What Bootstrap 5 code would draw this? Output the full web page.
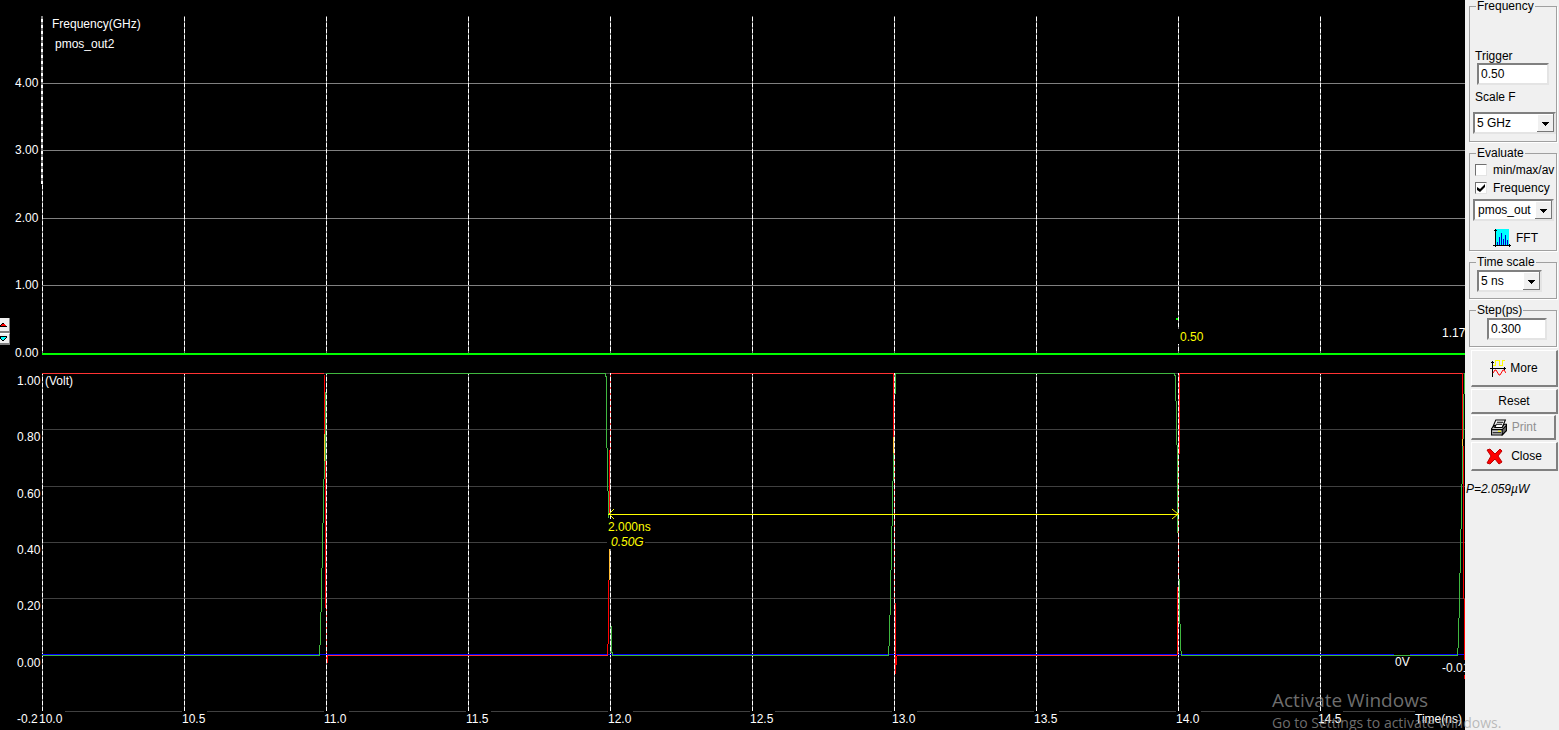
<!DOCTYPE html>
<html lang="en">
<head>
<meta charset="utf-8">
<meta name="viewport" content="width=device-width, initial-scale=1">
<title>Frequency vs. time simulation</title>
<link href="https://cdn.jsdelivr.net/npm/bootstrap@5.3.0/dist/css/bootstrap.min.css" rel="stylesheet">
<style>
body{background:#f0f0f0;color:#000;font:12px/16px "Liberation Sans",Arial,sans-serif}
.scope{background:#000;min-width:0}
.scope svg text{font:12px "Liberation Sans",Arial,sans-serif;fill:#fff}
.scope svg text.yel{fill:#ff0}
.scope svg text.slant{font-style:italic}
.panel{width:94px;padding:0 2px 0 4px}
.group{border:1px solid #a0a0a0;box-shadow:1px 1px 0 #fff;margin:0 0 5px;padding:2px 0 6px 3px;min-width:0}
.group legend{float:none;width:auto;font-size:12px;line-height:12px;margin:0 0 0 3px;padding:0 1px}
.group.trig{padding-top:0;padding-bottom:7px}
.group.eval{padding-bottom:3px}
.cap{display:block;margin-left:2px;line-height:14px}
.cap-trigger{margin-top:37px}
.cap-scale{margin-top:5px;margin-bottom:8px}
.sunk{height:22px;border:2px solid;border-color:#808080 #e4e4e4 #e4e4e4 #808080;border-radius:0;background:#fff;color:#000;font-size:12px;line-height:18px;padding:0 2px;display:block}
select.sunk{appearance:none;background:#fff url("data:image/svg+xml,%3Csvg xmlns='http://www.w3.org/2000/svg' width='17' height='18'%3E%3Cpath fill='%23777' d='M0 0h17v18H0z'/%3E%3Cpath fill='%23fff' d='M0 0h16v17H0z'/%3E%3Cpath fill='%23f0f0f0' d='M1 1h15v16H1z'/%3E%3Cpath d='M5 8h7v1H5zM6 9h5v1H6zM7 10h3v1H7zM8 11h1v1H8z'/%3E%3C/svg%3E") right center no-repeat}
.w-trigger{width:72px}.w-scale{width:83px}.w-signal{width:81px;padding-left:3px;margin-top:2px}.w-time{width:65px}.w-step{width:60px;margin-left:14px}
.tick{appearance:none;width:12px;height:12px;margin:0;flex:none;background:#fff;border:1px solid;border-color:#707070 #e4e4e4 #e4e4e4 #707070}
.tick:checked{background:#fff url("data:image/svg+xml,%3Csvg xmlns='http://www.w3.org/2000/svg' width='10' height='10'%3E%3Cpath d='M1 4l3 2 5-5v3L4 9 1 7z'/%3E%3C/svg%3E")}
.opt{height:18px;gap:6px;padding-left:2px}
.raised{border:solid;border-width:1px 2px 2px 1px;border-color:#fff #808080 #808080 #fff;border-radius:0;background:#f0f0f0;color:#000;font-size:12px;line-height:16px;padding:0;width:87px;margin:0 0 2px 2px}
.raised:disabled{background:#f0f0f0;color:#909090;border-color:#fff #808080 #808080 #fff;opacity:1}
.raised.h-reset{margin-bottom:1px}
.flatbtn{border:0;border-radius:0;font-size:12px;line-height:16px;padding:0;color:#000;gap:5px}
.h-more{height:37px}.h-reset,.h-print{height:25px}.h-close{height:29px}
.raised.h-print{width:85px}
.group.step{margin-bottom:3px}
.power{font-style:italic;margin:8px 0 0 -3px}
.spin{left:0;top:318px;width:10px}
.spin button{display:block;width:10px;height:15px;padding:0;border:solid #808080;border-width:0 1px 2px 0;background:#f0f0f0;line-height:0}
.spin button+button{height:12px;border-top:1px solid #fff}
.watermark{right:51px;bottom:-2px;width:236px;color:rgba(160,160,160,.69);font-family:"Open Sans","Noto Sans",sans-serif;font-size:14px;line-height:18px;white-space:nowrap;pointer-events:none}
.watermark strong{display:block;font-weight:400;font-size:19px;line-height:28px}
</style>
</head>
<body>
<div class="d-flex min-vh-100 position-relative overflow-hidden">
<main class="scope flex-grow-1 position-relative">
<svg class="d-block w-100 h-auto" viewBox="0 0 1465 730" shape-rendering="crispEdges" role="img" aria-label="Frequency and voltage against time">
<defs>
<pattern id="dash" width="1" height="6" y="16" patternUnits="userSpaceOnUse"><path fill="#808080" d="M0 0h1v6H0z"/><path fill="#fff" d="M0 1h1v4H0z"/></pattern>
<pattern id="thick" width="2" height="6" y="16" x="41" patternUnits="userSpaceOnUse"><path fill="#808080" d="M0 0h2v6H0z"/><path fill="#fff" d="M0 3h2v3H0z"/></pattern>
<pattern id="dashred" width="1" height="6" y="16" patternUnits="userSpaceOnUse"><path fill="#f44" d="M0 0h1v6H0z"/><path fill="#fff" d="M0 1h1v4H0z"/></pattern>
</defs>
<!-- horizontal grid -->
<path fill="#808080" d="M42 83h1423v1H42zM42 150h1423v1H42zM42 218h1423v1H42zM42 285h1423v1H42zM42 353h1423v1H42z"/>
<path fill="#404040" d="M42 373h1423v1H42zM42 429h1423v1H42zM42 486h1423v1H42zM42 542h1423v1H42zM42 598h1423v1H42zM42 711h1373v1H42z"/>
<!-- vertical grid -->
<path fill="url(#dash)" d="M42 16h1v337h-1zM184 16h1v337h-1zM326 16h1v337h-1zM468 16h1v337h-1zM610 16h1v337h-1zM752 16h1v337h-1zM894 16h1v337h-1zM1036 16h1v337h-1zM1178 16h1v337h-1zM1320 16h1v337h-1z"/>
<path fill="url(#dash)" d="M42 373h1v338h-1zM184 373h1v338h-1zM326 373h1v338h-1zM468 373h1v338h-1zM610 373h1v338h-1zM752 373h1v338h-1zM894 373h1v338h-1zM1036 373h1v338h-1zM1178 373h1v338h-1zM1320 373h1v338h-1z"/>
<path fill="url(#thick)" d="M41 16h2v168h-2z"/>
<path fill="url(#dashred)" d="M326 607h1v52h-1zM610 373h1v77h-1zM894 453h1v150h-1zM1178 454h1v124h-1z"/>
<!-- frequency trace -->
<path fill="#0f0" d="M42 353h1423v2H42zM1176 318h2v2h-2z"/>
<!-- supply at zero -->
<path fill="#00f" d="M42 654h1352v1H42zM1410 654h55v1h-55z"/>
<!-- signals -->
<path fill="#40b840" d="M326 373h280v1H326zM895 373h280v1H895zM42 655h278v1H42zM612 655h277v1H612zM1181 655h277v1h-277z
M324 461h1v18h-1zM323 479h1v44h-1zM322 523h1v45h-1zM321 568h1v44h-1zM320 612h1v33h-1zM319 645h1v11h-1zM325 392h1v69h-1z
M605 373h1v4h-1zM606 376h1v72h-1zM607 448h1v43h-1zM608 491h1v27h-1zM611 626h1v27h-1zM612 652h1v4h-1z
M893 453h1v28h-1zM892 481h1v45h-1zM891 526h1v44h-1zM890 570h1v45h-1zM889 615h1v31h-1zM888 646h1v10h-1zM895 373h1v21h-1z
M1174 373h1v3h-1zM1175 375h1v26h-1zM1176 401h1v44h-1zM1177 445h1v88h-1zM1179 579h1v45h-1zM1180 624h1v27h-1zM1181 651h1v5h-1z
M1462 446h1v38h-1zM1461 484h1v45h-1zM1460 529h1v44h-1zM1459 573h1v45h-1zM1458 618h1v30h-1zM1457 648h1v8h-1zM1464 373h1v21h-1zM1463 394h1v45h-1z"/>
<path fill="#f33" d="M42 373h282v1H42zM611 373h283v1H611zM1179 373h284v1h-284zM328 655h280v1H328zM897 655h280v1H897z"/>
<path fill="#f00" d="M324 375h1v59h-1zM325 461h1v147h-1zM327 655h1v8h-1z
M609 450h1v64h-1zM608 580h1v64h-1zM607 644h1v11h-1z
M893 373h1v64h-1zM895 603h1v71h-1zM896 656h1v9h-1z
M1179 373h1v81h-1zM1177 587h1v68h-1z
M1462 373h1v66h-1zM1463 446h1v153h-1zM1464 599h1v61h-1zM1464 675h1v4h-1z"/>
<path fill="#fb3" d="M324 434h1v27h-1zM609 549h1v31h-1zM893 437h1v16h-1zM1462 439h1v7h-1z"/>
<!-- period marker -->
<path fill="#ff0" d="M608 514h571v1H608z"/>
<path fill="none" stroke="#ff0" shape-rendering="auto" d="M614 509l-5 5 5 5M1172 509l6 5-6 5"/>
<!-- label backgrounds -->
<path fill="#000" d="M607 519h46v15h-46zM607 534h38v15h-38zM1178 329h28v15h-28zM38 711h27v15H38zM182 711h25v15h-25zM324 711h25v15h-25zM466 711h25v15h-25zM608 711h25v15h-25zM750 711h25v15h-25zM892 711h25v15h-25zM1034 711h25v15h-25zM1176 711h25v15h-25zM1318 711h25v15h-25zM1442 326h23v15h-23z"/>
<g>
<text x="52" y="28">Frequency(GHz)</text><text x="55" y="48">pmos_out2</text>
<text x="15" y="87">4.00</text><text x="15" y="154">3.00</text><text x="15" y="222">2.00</text><text x="15" y="289">1.00</text><text x="15" y="357">0.00</text>
<text x="17" y="385">1.00</text><text x="45" y="385">(Volt)</text><text x="17" y="441">0.80</text><text x="17" y="498">0.60</text><text x="17" y="554">0.40</text><text x="17" y="610">0.20</text><text x="17" y="667">0.00</text>
<text x="17" y="723">-0.2</text><text x="39" y="723">10.0</text><text x="182" y="723">10.5</text><text x="324" y="723">11.0</text><text x="466" y="723">11.5</text><text x="608" y="723">12.0</text><text x="750" y="723">12.5</text><text x="892" y="723">13.0</text><text x="1034" y="723">13.5</text><text x="1176" y="723">14.0</text><text x="1318" y="723">14.5</text><text x="1415" y="723">Time(ns)</text>
<text class="yel" x="608" y="531">2.000ns</text><text class="yel slant" x="611" y="546">0.50G</text><text class="yel" x="1180" y="341">0.50</text>
<text x="1442" y="337">1.17</text><text x="1395" y="666">0V</text><text x="1442" y="672">-0.01</text>
</g>
</svg>
<div class="spin position-absolute">
<button type="button" aria-label="Scale up"><svg width="9" height="13" shape-rendering="crispEdges"><path d="M0 9h7V8H6V7H5V6H4V5H2v1H1v1H0z"/><path fill="#f00" d="M1 8h5V7H5V6H2v1H1z"/></svg></button>
<button type="button" aria-label="Scale down"><svg width="9" height="9" shape-rendering="crispEdges"><path d="M0 2h7v2H6v1H5v1H4v1H2V6H1V5H0z"/><path fill="#0ff" d="M1 3h5v1H5v1H4v1H2V5H1z"/></svg></button>
</div>
</main>
<aside class="panel flex-shrink-0">
<form class="d-flex flex-column">
<fieldset class="group trig">
<legend>Frequency</legend>
<label for="trigger" class="cap cap-trigger">Trigger</label>
<input id="trigger" class="sunk w-trigger ms-1" value="0.50">
<label for="scale" class="cap cap-scale">Scale F</label>
<select id="scale" class="sunk w-scale"><option>5 GHz</option></select>
</fieldset>
<fieldset class="group eval">
<legend>Evaluate</legend>
<div class="opt d-flex align-items-center"><input class="tick" type="checkbox" id="mm"><label for="mm" class="text-nowrap">min/max/av</label></div>
<div class="opt d-flex align-items-center"><input class="tick" type="checkbox" id="fq" checked><label for="fq">Frequency</label></div>
<select class="sunk w-signal" aria-label="Signal"><option>pmos_out</option></select>
<button type="button" class="btn flatbtn d-flex align-items-center ms-3 mt-2 ps-1"><svg width="18" height="18" shape-rendering="crispEdges"><path fill="#0ff" d="M2 0h14v16H2z"/><path d="M2 0h1v18H2zM1 1h3v1H1zM0 16h18v1H0zM16 15h1v3h-1z"/><path fill="#00c" d="M4 13h1v3H4zM6 8h1v8H6zM8 4h1v12H8zM10 10h1v6h-1zM12 6h1v10h-1zM14 11h1v5h-1z"/></svg>FFT</button>
</fieldset>
<fieldset class="group">
<legend>Time scale</legend>
<select class="sunk w-time ms-1" aria-label="Time scale"><option>5 ns</option></select>
</fieldset>
<fieldset class="group step">
<legend>Step(ps)</legend>
<input class="sunk w-step" aria-label="Step in picoseconds" value="0.300">
</fieldset>
<button type="button" class="btn raised h-more d-flex align-items-center justify-content-center gap-1"><svg width="16" height="17" shape-rendering="crispEdges"><path fill="#ff0" d="M3 5h2V0h5v5h2V0h3v1h-2v5H9V1H6v5H3z"/><path d="M2 1h1v16H2zM1 2h3v1H1zM0 8h16v1H0zM14 7h1v3h-1z"/><path fill="none" stroke="#f00" shape-rendering="auto" d="M3 13l2-3h1l3 5h1l3-5h1l2 3"/></svg>More</button>
<button type="button" class="btn raised h-reset">Reset</button>
<button type="button" class="btn raised h-print d-flex align-items-center justify-content-center gap-1" disabled><svg width="18" height="17" viewBox="0 0 16 16"><path fill="#fff" stroke="#000" d="M5 1h9l-3 7H2z"/><path stroke="#000" d="M6 3h6M5 5h6"/><path fill="#ccc" stroke="#000" d="M1 9l3-3h1L4 8h7l2-3h2v5l-4 5H1z"/><path fill="#666" stroke="#000" d="M11 10l4-4v5l-4 4z"/><path stroke="#000" d="M1 10h10M2 13h8"/><path fill="#ff0" d="M7 11h3v1H7z"/></svg>Print</button>
<button type="button" class="btn raised h-close d-flex align-items-center justify-content-center gap-2"><svg width="17" height="17" viewBox="0 0 17 17"><path fill="#f00" stroke="#b00" d="M1 2l3-1 5 5 5-5 2 2-4 5 4 6-3 2-4-5-5 5-3-1 4-7z"/></svg>Close</button>
<output class="power">P=2.059µW</output>
</form>
</aside>
<div class="watermark position-absolute"><strong>Activate Windows</strong>Go to Settings to activate Windows.</div>
</div>
<script src="https://cdn.jsdelivr.net/npm/bootstrap@5.3.0/dist/js/bootstrap.bundle.min.js"></script>
</body>
</html>
